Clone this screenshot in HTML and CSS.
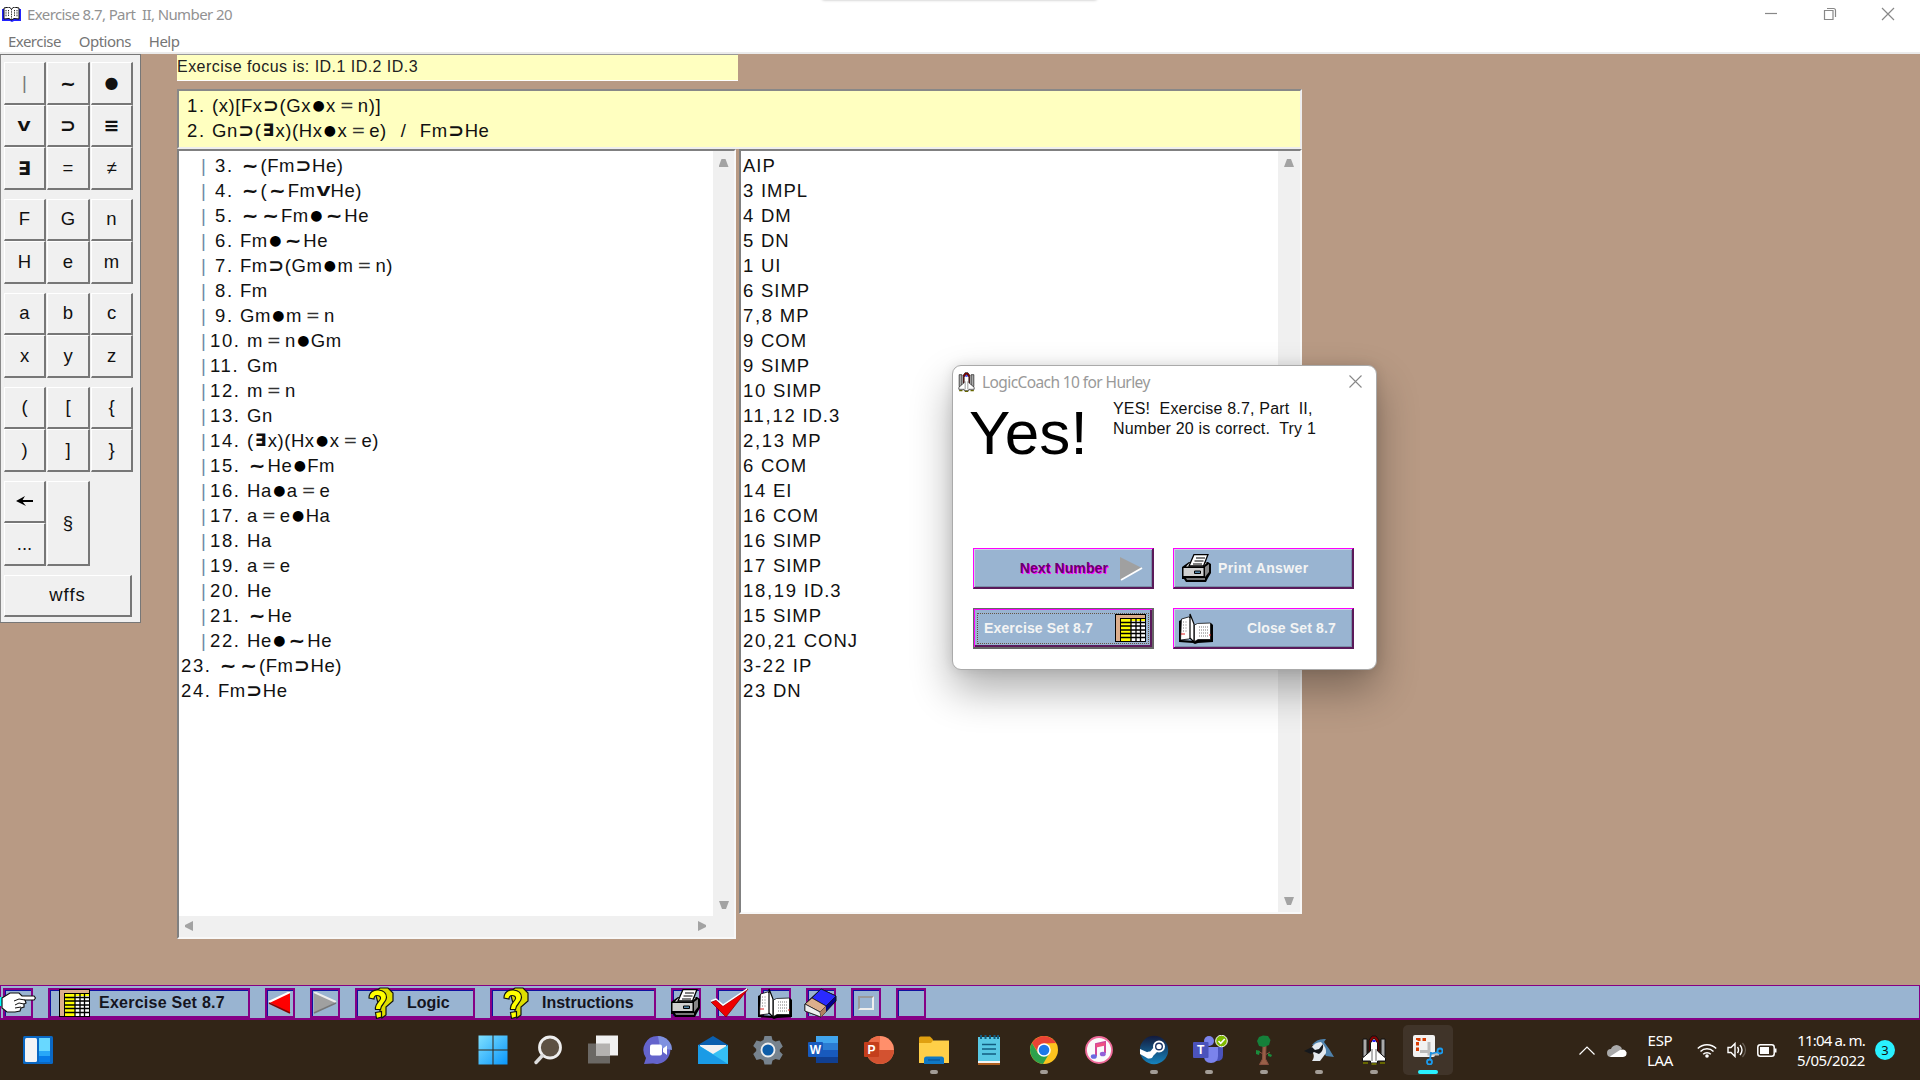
FILE: index.html
```html
<!DOCTYPE html>
<html lang="en">
<head>
<meta charset="utf-8">
<title>Exercise 8.7, Part II, Number 20</title>
<link rel="stylesheet" href="styles.css">
</head>
<body>
<svg class="defs" width="0" height="0" aria-hidden="true">
  <symbol id="printer" viewBox="0 0 30 28">
    <path d="M1 13l7-5h19l3 2v9l-3 5-2 4H5l-2-3H1z" fill="#000"/>
    <path d="M2.500 14h20v8h-20z" fill="#d0d0d0"/><path d="M24 13l4-3v8l-4 5z" fill="#888"/>
    <path d="M5 12.500l4-4h17l-4 4z" fill="#e8e8e8"/><path d="M5 24h19v2H6z" fill="#777"/>
    <path d="M8 12l5-11.500h14L22.500 12z" fill="#fff" stroke="#000" stroke-width="1.300"/>
    <path d="M15 4h9M13.500 7h9M12 10h9" stroke="#000"/><path d="M13.500 17h6v2.500h-6z" fill="#58a" stroke="#000"/>
  </symbol>
  <symbol id="openbook" viewBox="0 0 34 31">
    <path d="M0 8l2-1v20l14 1V12l4-1 12-1 2 2v17l-15 1-3 1-2-1-14-1z" fill="#000"/>
    <path d="M2.500 6l7-2 2 1v20l-2 1-8 1z" fill="#fff" stroke="#000" stroke-width=".8"/>
    <path d="M11 1l2 5 2 5v18l-4-4z" fill="#fff" stroke="#000" stroke-width="1.200"/>
    <path d="M15.500 12l3-1.500 13-.5v16.500H19l-3.500 2z" fill="#fff" stroke="#000" stroke-width=".7"/>
    <path d="M20 14h9.500M20 17h9.500M20 20h9.500M20 23h9.500" stroke="#777" stroke-dasharray="1 1"/>
    <path d="M4 9h5M4 12h5M4 15h5M4 18h5" stroke="#777" stroke-dasharray="1 1.500"/>
    <path d="M2 21h4M30 22h2" stroke="#e02020"/>
  </symbol>
  <symbol id="sheet" viewBox="0 0 31 28">
    <path d="M0 0h31v28H0z" fill="#000"/><path d="M1 1h29v3H5v23H1z" fill="#dcae8c"/>
    <path d="M6 5h10v22H6z" fill="#ff0"/><path d="M16 5h14v22H16z" fill="#fff"/><path d="M6 5h24v2H16z" fill="#ff0"/>
    <path d="M6 8.500h24M6 12h24M6 16h24M6 19.500h24M6 23.500h24M16 5v22M21 5v22M25.500 5v22" stroke="#000" stroke-width="1.300"/>
  </symbol>
  <symbol id="question" viewBox="0 0 26 32">
    <path d="M7 5l5-4h8l5 5v8l-7 6v8l-4 3z" fill="#dede00" stroke="#111" stroke-width="1.200"/>
    <path d="M1 11c0-6 5-8.500 9.500-8 5 .500 8 3 8 7.500 0 5-6 7-6 12H7.500c-1-6 4.500-8 5-11 .300-2-1.500-3-3.500-3-2 0-3 1.500-3 3.500z" fill="#ff0" stroke="#111" stroke-width="1.200"/>
    <path d="M7.500 25.500l6-1v5.500l-5 1.500z" fill="#ff0" stroke="#111" stroke-width="1.200"/>
  </symbol>
  <symbol id="shuttle" viewBox="0 0 28 30">
    <path d="M3 4h4v18H3zM21 4h4v18h-4z" fill="#aaa" stroke="#111"/>
    <path d="M9 5l3-4h4l3 4v12H9z" fill="#8b0000" stroke="#111"/>
    <path d="M14 3l3.500 5v8l8 7v3h-8v2h-7v-2h-8v-3l8-7V8z" fill="#fff" stroke="#111"/>
    <path d="M12 14v12M16 14v12" stroke="#444" stroke-width=".8"/><path d="M12.500 6h3" stroke="#22f" stroke-width="2"/>
    <path d="M3 28h5M11.500 29h5M20 28h5" stroke="#660" stroke-width="2"/>
  </symbol>
</svg>

<header class="titlebar">
  <svg class="app-icon" viewBox="0 0 19 15"><path d="M0 2h19v12h-7l-2 1-2-1H0z" fill="#22f"/><path d="M2 1l5-1 2.500 2L12 0l5 1v11l-5-.500-2.500 1.500L7 11.500 2 12z" fill="#fff" stroke="#111"/><path d="M9.500 2v11M4 3v7M6.500 3v6M12.500 3v6M15 3v7" stroke="#222" stroke-dasharray="1 .7"/></svg>
  <span class="title">Exercise 8.7, Part&nbsp; II, Number 20</span>
  <div class="window-controls">
    <svg viewBox="0 0 14 14"><path d="M1 6.500h12"/></svg>
    <svg viewBox="0 0 14 14"><path d="M1.500 3.500h8.500v9H1.500zM4 1.500h6.500q2 0 2 2V10"/></svg>
    <svg viewBox="0 0 14 14"><path d="M1 1l12 12M13 1L1 13"/></svg>
  </div>
  <i class="top-edge"></i>
</header>
<nav class="menubar"><span>Exercise</span><span>Options</span><span>Help</span></nav>

<main class="workspace">
  <aside class="keypad">
    <div class="keys"><b class="bar">|</b><b class="sym">~</b><b class="sym dot">●</b><b class="sym vee"><i>v</i></b><b class="sym">⊃</b><b class="sym">≡</b><b class="sym">∃</b><b>=</b><b>≠</b></div>
    <div class="keys"><b>F</b><b>G</b><b>n</b><b>H</b><b>e</b><b>m</b></div>
    <div class="keys"><b>a</b><b>b</b><b>c</b><b>x</b><b>y</b><b>z</b></div>
    <div class="keys"><b>(</b><b>[</b><b>{</b><b>)</b><b>]</b><b>}</b></div>
    <div class="keys"><b><svg width="18" height="12" viewBox="0 0 18 12"><path d="M3 6h14" stroke="#000" stroke-width="2"/><path d="M0 6l9-5-3 5 4 5z"/></svg></b><b class="tall">§</b><b class="first">...</b></div>
    <div class="keys wide"><b>wffs</b></div>
  </aside>

  <section class="proof">
    <div class="focus">Exercise focus is: ID.1 ID.2 ID.3</div>
    <div class="premises">
      <p><span class="n">1.</span>(x)[Fx<i class="h">⊃</i>(Gx<i class="d">●</i>x<i class="q">=</i>n)]</p>
      <p><span class="n">2.</span>Gn<i class="h">⊃</i>(<i class="e">∃</i>x)(Hx<i class="d">●</i>x<i class="q">=</i>e)<i class="slash">/</i>Fm<i class="h">⊃</i>He</p>
    </div>
    <div class="panels">
      <div class="panel steps">
        <div class="lines">
          <p class="in one"><span class="n">3.</span><i class="t">~</i>(Fm<i class="h">⊃</i>He)</p>
          <p class="in one"><span class="n">4.</span><i class="t">~</i>(<i class="t">~</i>Fm<i class="v">v</i>He)</p>
          <p class="in one"><span class="n">5.</span><i class="t">~</i><i class="t">~</i>Fm<i class="d">●</i><i class="t">~</i>He</p>
          <p class="in one"><span class="n">6.</span>Fm<i class="d">●</i><i class="t">~</i>He</p>
          <p class="in one"><span class="n">7.</span>Fm<i class="h">⊃</i>(Gm<i class="d">●</i>m<i class="q">=</i>n)</p>
          <p class="in one"><span class="n">8.</span>Fm</p>
          <p class="in one"><span class="n">9.</span>Gm<i class="d">●</i>m<i class="q">=</i>n</p>
          <p class="in"><span class="n">10.</span>m<i class="q">=</i>n<i class="d">●</i>Gm</p>
          <p class="in"><span class="n">11.</span>Gm</p>
          <p class="in"><span class="n">12.</span>m<i class="q">=</i>n</p>
          <p class="in"><span class="n">13.</span>Gn</p>
          <p class="in"><span class="n">14.</span>(<i class="e">∃</i>x)(Hx<i class="d">●</i>x<i class="q">=</i>e)</p>
          <p class="in"><span class="n">15.</span><i class="t">~</i>He<i class="d">●</i>Fm</p>
          <p class="in"><span class="n">16.</span>Ha<i class="d">●</i>a<i class="q">=</i>e</p>
          <p class="in"><span class="n">17.</span>a<i class="q">=</i>e<i class="d">●</i>Ha</p>
          <p class="in"><span class="n">18.</span>Ha</p>
          <p class="in"><span class="n">19.</span>a<i class="q">=</i>e</p>
          <p class="in"><span class="n">20.</span>He</p>
          <p class="in"><span class="n">21.</span><i class="t">~</i>He</p>
          <p class="in"><span class="n">22.</span>He<i class="d">●</i><i class="t">~</i>He</p>
          <p><span class="n">23.</span><i class="t">~</i><i class="t">~</i>(Fm<i class="h">⊃</i>He)</p>
          <p><span class="n">24.</span>Fm<i class="h">⊃</i>He</p>
        </div>
        <div class="vscroll"><i class="up"></i><i class="down"></i></div>
        <div class="hscroll"><i class="left"></i><i class="right"></i></div>
      </div>
      <div class="panel reasons">
        <div class="lines">
          <p>AIP</p><p><u>3</u> IMPL</p><p><u>4</u> DM</p><p><u>5</u> DN</p><p><u>1</u> UI</p><p><u>6</u> SIMP</p><p><u>7,8</u> MP</p><p><u>9</u> COM</p><p><u>9</u> SIMP</p><p><u>10</u> SIMP</p><p><u>11,12</u> ID.3</p><p><u>2,13</u> MP</p><p><u>6</u> COM</p><p><u>14</u> EI</p><p><u>16</u> COM</p><p><u>16</u> SIMP</p><p><u>17</u> SIMP</p><p><u>18,19</u> ID.3</p><p><u>15</u> SIMP</p><p><u>20,21</u> CONJ</p><p><u>3-22</u> IP</p><p><u>23</u> DN</p>
        </div>
        <div class="vscroll"><i class="up"></i><i class="down"></i></div>
      </div>
    </div>
  </section>
</main>

<footer class="toolbar">
  <button class="tool"><svg class="hand" width="37" height="22" viewBox="0 0 37 22"><path d="M0 5h4v9H0z" fill="#0ff"/><path d="M3 6l8-5h9l3 3h12l1.500 2-1.500 2H26l1 3-2 1v3l-3 1-1 3-5 1H8l-5-4z" fill="#fff" stroke="#111" stroke-width="1.200"/><path d="M15 9l5-2 6 1M16 13l4-2 5 1M16 16l6-1" fill="none" stroke="#111"/></svg></button>
  <button class="tool set"><svg width="31" height="28"><use href="#sheet"/></svg><span>Exercise Set 8.7</span></button>
  <button class="tool"><svg width="24" height="22" viewBox="0 0 24 22"><path d="M1 10L22 0v21z" fill="red"/><path d="M1 10L22 0" stroke="#fff" stroke-width="2"/><path d="M1 11l21 10" stroke="#800" stroke-width="1.500"/></svg></button>
  <button class="tool"><svg width="24" height="22" viewBox="0 0 24 22"><path d="M1 0l22 10L1 21z" fill="#a0a0a0"/><path d="M1 0l22 10" stroke="#eee" stroke-width="2"/><path d="M23 11L1 21" stroke="#777" stroke-width="1.500"/></svg></button>
  <button class="tool logic"><svg width="26" height="32"><use href="#question"/></svg><span>Logic</span></button>
  <button class="tool instr"><svg width="26" height="32"><use href="#question"/></svg><span>Instructions</span></button>
  <button class="tool pic"><svg width="30" height="28"><use href="#printer"/></svg></button>
  <button class="tool pic"><svg width="40" height="30" viewBox="0 0 40 30"><path d="M1 14l5-2 7 6L38 1 16 29z" fill="#e00" stroke="#700" stroke-width=".7"/><path d="M1 13l5-2 7 6L37 1" fill="none" stroke="#fff" stroke-width="1.500"/></svg></button>
  <button class="tool pic"><svg width="34" height="31"><use href="#openbook"/></svg></button>
  <button class="tool pic"><svg width="33" height="30" viewBox="0 0 33 30"><path d="M1 16L17 1l15 7v5L17 29 1 23z" fill="#00008b" stroke="#111"/><path d="M17 1l15 7-10 10-14-8z" fill="#2a2aff" stroke="#111" stroke-width=".7"/><path d="M8 10l14 8-6 6-15-8z" fill="#dcae8c" stroke="#111" stroke-width=".7"/><path d="M1 16l15 8 1 5-16-6z" fill="#eee" stroke="#111" stroke-width=".7"/><path d="M16 24l6-6v6l-5 5z" fill="#b08060"/></svg></button>
  <button class="tool"><i class="blank"></i></button>
  <button class="tool"></button>
</footer>

<footer class="taskbar">
  <svg class="widgets" width="30" height="28" viewBox="0 0 30 28"><rect width="30" height="28" rx="1.500" fill="#0a68c4"/><rect x="2" y="2" width="12" height="24" rx="1.500" fill="#f4f4f6"/><path d="M16 2h11v13H16z" fill="#68d8ff"/><path d="M16 15h11v5H16z" fill="#28a8f8"/><path d="M16 20h11v6H16z" fill="#087ce8"/></svg>
  <div class="apps">
    <span><svg viewBox="0 0 30 30"><defs><linearGradient id="win" x2="1" y2="1"><stop stop-color="#7fe0ff"/><stop offset="1" stop-color="#0a96fa"/></linearGradient></defs><path d="M.5.5h14v14H.5zM15.500.5h14v14h-14zM.5 15.500h14v14H.5zM15.500 15.500h14v14h-14z" fill="url(#win)"/></svg></span>
    <span><svg viewBox="0 0 30 30"><circle cx="17" cy="12.500" r="10.500" fill="#5d5143" stroke="#eee" stroke-width="2.800"/><path d="M9.500 20.500L3 27.500" stroke="#ddd" stroke-width="3.400" stroke-linecap="round"/></svg></span>
    <span><svg viewBox="0 0 30 30"><path d="M0 8.500h22v20H0z" fill="#6b6864"/><path d="M8 .5h22v20H8z" fill="#f1f1f1"/><path d="M8 8.500h14v12H8z" fill="#b4b2b0"/></svg></span>
    <span><svg viewBox="0 0 30 30"><path d="M15 1a14 14 0 1 1-5 27.500L1 29l2-6A14 14 0 0 1 15 1z" fill="#6464cc"/><path d="M15 1a14 14 0 0 1 14 14L17 13z" fill="#7f91e0"/><rect x="7" y="9.500" width="12" height="11" rx="2" fill="#fff"/><path d="M20 13.500l4-3v9.500l-4-3z" fill="#fff"/></svg></span>
    <span><svg viewBox="0 0 30 30"><path d="M0 10L15 1l15 9v6H0z" fill="#0a5fae"/><path d="M2 10h26v12H2z" fill="#f1f1f1"/><path d="M0 10l15 9 15-9v19H0z" fill="#35c0f4"/><path d="M0 29V10l30 19z" fill="#1a9be6"/></svg></span>
    <span><svg viewBox="0 0 30 30"><path d="M11.500 1h7l1 4 3 1.500 4-1 3.300 6-3 3v2l3 3-3.300 5.500-4-1-3 1.500-1 4h-7l-1-4-3-1.500-4 1L.2 19l3-3v-2l-3-3 3.300-5.500 4 1 3-1.500z" fill="#77838e"/><circle cx="15" cy="15" r="6.500" fill="#0e5da8" stroke="#eee" stroke-width="1.800"/></svg></span>
    <span><svg viewBox="0 0 30 30"><path d="M8 1h22v9H8z" fill="#41a5ee"/><path d="M8 8h22v7H8z" fill="#2b7cd3"/><path d="M8 15h22v7H8z" fill="#185abd"/><path d="M8 22h22v6H8z" fill="#103f91"/><rect x="0" y="7" width="15" height="15" rx="1" fill="#185abd"/><text x="7.500" y="18.500" class="logo">W</text></svg></span>
    <span><svg viewBox="0 0 30 30"><circle cx="16" cy="15" r="14" fill="#ff8f6b"/><path d="M16 15h14A14 14 0 0 1 2 15z" fill="#d35230"/><path d="M16 1v14H2A14 14 0 0 1 16 1z" fill="#ed6c47"/><rect x="0" y="7" width="15" height="15" rx="1" fill="#c43e1c"/><text x="7.500" y="18.500" class="logo">P</text></svg></span>
    <span class="run"><svg viewBox="0 0 30 30"><path d="M0 3q0-1.500 1.500-1.500H11l3 3v5H0z" fill="#e0a010"/><path d="M0 8h12l2-2.500h16V28H0z" fill="#ffcf48"/><path d="M5 29v-5q0-2.500 2.500-2.500h15q2.500 0 2.500 2.500v5z" fill="#0f78c4"/><path d="M9 25h12" stroke="#0a4a88"/></svg></span>
    <span><svg viewBox="0 0 30 30"><path d="M4 2h22v24H4z" fill="#58c8e4"/><path d="M4 26h22v2.500H4z" fill="#f4f4f4"/><path d="M4 28h22v2H4z" fill="#b06020"/><path d="M8 9.500h14M8 14h14M8 19h14" stroke="#125c80" stroke-width="1.700"/><path d="M7 0v4M11.500 0v4M16 0v4M20.500 0v4M24 0v4" stroke="#125c80" stroke-width="2"/></svg></span>
    <span class="run"><svg viewBox="0 0 30 30"><circle cx="15" cy="15" r="14" fill="#fcc31e"/><path d="M2.900 8A14 14 0 0 1 27.100 8L15 8.500 9.500 18z" fill="#ea4335"/><path d="M2.900 8A14 14 0 0 0 14 29l6.500-11H9z" fill="#2da14c"/><circle cx="15" cy="15" r="6.800" fill="#fff"/><circle cx="15" cy="15" r="5.300" fill="#1e78e8"/></svg></span>
    <span><svg viewBox="0 0 30 30"><circle cx="15" cy="15" r="13" fill="#fafafa" stroke="#ef6a9a" stroke-width="1.800"/><path d="M12 21V9l9-2v11" fill="none" stroke="#d0489a" stroke-width="2"/><path d="M12 11l9-2" stroke="#f05080" stroke-width="3"/><ellipse cx="9.800" cy="21.500" rx="3" ry="2.300" fill="#6a6ae0"/><ellipse cx="18.800" cy="19" rx="3" ry="2.300" fill="#9060d8"/></svg></span>
    <span class="run"><svg viewBox="0 0 30 30"><defs><linearGradient id="stm" x2="0" y2="1"><stop stop-color="#131a3c"/><stop offset="1" stop-color="#1684be"/></linearGradient></defs><circle cx="15" cy="15" r="14.200" fill="url(#stm)"/><path d="M1 14l9 4 5-6 4 4-6 6-4 1.500L1 19z" fill="#fff"/><circle cx="20" cy="11.500" r="5" fill="#1a3464" stroke="#fff" stroke-width="2"/><circle cx="20" cy="11.500" r="2.600" fill="#fff"/><circle cx="10.500" cy="20" r="3.500" fill="#fff"/></svg></span>
    <span class="run"><svg class="teams" viewBox="0 0 36 30"><circle cx="16" cy="6" r="5" fill="#7b83eb"/><path d="M20 12h10v8q0 6-6 6h-4z" fill="#4b53bc"/><path d="M11 12h14v9q0 7-7 7t-7-7z" fill="#7b83eb"/><rect x="0" y="7" width="15.500" height="16" rx="1" fill="#4b53bc"/><text x="7.700" y="19" class="logo">T</text><circle cx="28.500" cy="6" r="5.800" fill="#7fba00" stroke="#fff"/><path d="M25.500 6l2.200 2.300 4-4.300" fill="none" stroke="#fff" stroke-width="1.600"/></svg></span>
    <span class="run"><svg viewBox="0 0 30 30"><path d="M14 11h3l-.5 13 3 5.500h-9l3-5.500zM16 20l5-3M14 19l-5-3" fill="#9a6048" stroke="#8a5040"/><path d="M10 2l4-1.500 5 .500 2.500 4-1.500 5-5 2-5-1-2-5z" fill="#15803a"/><path d="M7 15l4 1-1 4-3-1zM19 18l4 2-1 2-3-1z" fill="#1a8c3c"/></svg></span>
    <span class="run"><svg viewBox="0 0 30 30"><path d="M8 10q5-7 14-6l-2 3q5 6 10 15l-8-1-6-9z" fill="#4f82ac"/><path d="M7 13q4-6 10-6 6 6 5 11l-6 8H8q3-4 1-8z" fill="#e4eaf0"/><path d="M0 16l8-4 3 3 4-1 4-5q1 7-4 10l-5-2-3 2z" fill="#15181c"/></svg></span>
    <span class="run"><svg viewBox="0 0 28 30"><use href="#shuttle"/></svg></span>
    <span class="active"><svg viewBox="0 0 30 30"><rect y="0" width="22" height="22" rx="2" fill="#f2f2f2"/><path d="M4.500 16V4.500H14" fill="none" stroke="#d83b01" stroke-width="3" stroke-dasharray="3.500 2"/><path d="M16 7v12h10M7 16.500h10" fill="none" stroke="#bbb" stroke-width="3"/><path d="M17 19l8-2M18 17l-1 8" stroke="#1a8fe0" stroke-width="1.800"/><circle cx="27" cy="16" r="2.500" fill="none" stroke="#1a9cf0" stroke-width="1.800"/><circle cx="16.500" cy="27" r="2.500" fill="none" stroke="#1a9cf0" stroke-width="1.800"/></svg></span>
  </div>
  <div class="tray">
    <svg width="16" height="9" viewBox="0 0 16 9"><path d="M.5 8.500L8 1l7.500 7.500"/></svg>
    <svg class="cloud" width="20" height="13" viewBox="0 0 20 13"><path d="M4 13a4 4 0 0 1 0-8 6 6 0 0 1 10-2l1 2-8 8z" fill="#aaa" stroke="none"/><path d="M3 12.500L13 6q5-2 6.500 2.500.5 4-3.500 4.500H4z" fill="#fff" stroke="none"/></svg>
    <div class="lang">ESP<br>LAA</div>
    <svg width="20" height="15" viewBox="0 0 20 15"><path d="M.8 5.500a13 13 0 0 1 18.400 0M3.500 8.500a9.200 9.200 0 0 1 13 0M6.200 11.300a5.400 5.400 0 0 1 7.600 0" stroke-width="1.500"/><circle cx="10" cy="13" r="1.800" fill="#fff" stroke="none"/></svg>
    <svg width="20" height="16" viewBox="0 0 20 16"><path d="M1 5.500h3l4-4v13l-4-4H1zM10.500 5q2 3 0 6M13 3q4 5 0 10" stroke-width="1.400"/><path d="M15.500 1q6 7 0 14" stroke="#6b6258"/></svg>
    <svg width="20" height="13" viewBox="0 0 20 13"><rect x=".8" y=".8" width="16.400" height="11.400" rx="2.500" stroke-width="1.500"/><path d="M3 3h9v7H3z" fill="#fff" stroke="none"/><path d="M18 4.500h1.500v4H18z" fill="#fff" stroke="none"/></svg>
    <div class="clock"><span class="time">11:04 a. m.</span><br>5/05/2022</div>
    <span class="badge">3</span>
  </div>
</footer>

<div class="dialog">
  <div class="dlg-title"><svg width="19" height="20" viewBox="0 0 28 30"><use href="#shuttle"/></svg><span>LogicCoach 10 for Hurley</span><svg class="x" width="13" height="13" viewBox="0 0 13 13"><path d="M.5.5l12 12M12.500.5l-12 12" stroke="#888" stroke-width="1.100"/></svg></div>
  <div class="dlg-body"><div class="yes">Yes!</div><div class="msg">YES!  Exercise 8.7, Part  II,
Number 20 is correct.  Try 1</div></div>
  <div class="dlg-buttons">
    <button class="db next"><span>Next Number</span><svg width="24" height="25" viewBox="0 0 24 25"><path d="M1 1l22 11L1 24z" fill="#a0a0a0"/><path d="M23 12L2 24" stroke="#fff" stroke-width="1.800"/></svg></button>
    <button class="db print"><svg width="30" height="28"><use href="#printer"/></svg><span>Print Answer</span></button>
    <button class="db exset"><span>Exercise Set 8.7</span><svg width="31" height="28"><use href="#sheet"/></svg></button>
    <button class="db close"><svg width="34" height="31"><use href="#openbook"/></svg><span>Close Set 8.7</span></button>
  </div>
</div>
</body>
</html>
```
FILE: styles.css
```css
* { box-sizing: border-box; }
body { margin: 0; width: 1920px; height: 1080px; overflow: hidden; background: #b89a84; font-family: "Liberation Sans", Arial, sans-serif; color: #111; display: flex; flex-direction: column; }
p { margin: 0; }
i { font-style: normal; }
button { margin: 0; padding: 0; font-family: inherit; }
svg { display: block; flex: none; }
.defs { position: absolute; }

.titlebar { height: 28px; background: #fff; display: flex; align-items: center; padding-left: 2px; font: 15px/28px "Noto Sans", sans-serif; color: #929292; position: relative; }
.app-icon { width: 19px; height: 15px; margin-right: 6px; }
.title { letter-spacing: -.6px; }
.window-controls { margin-left: auto; display: flex; gap: 44.500px; padding-right: 25px; }
.window-controls svg { width: 14px; height: 14px; fill: none; stroke: #888; stroke-width: 1.200; }
.top-edge { position: absolute; left: 822px; top: -4px; width: 275px; height: 4px; border-radius: 4px; box-shadow: 0 0 3px rgba(0,0,0,.3); }
.menubar { height: 26px; background: #fff; border-bottom: 2px solid #ebebeb; display: flex; gap: 18px; padding-left: 8px; font: 15px/26px "Noto Sans", sans-serif; color: #757575; letter-spacing: -.53px; }

.workspace { height: 931px; display: flex; align-items: flex-start; }
.keypad { width: 141px; height: 569px; margin-right: 36px; padding: 7px 0 0 4px; background: #f0f0f0; border: 1px solid #777; border-left-width: 0; border-top-width: 1px; box-shadow: inset 1px 0 #888; display: flex; flex-direction: column; gap: 9px; }
.keys { display: grid; grid-template-columns: 42px 43px 42px; column-gap: 1px; grid-auto-rows: 42.500px; }
.keys b { font-weight: 400; font-size: 18.500px; display: flex; align-items: center; justify-content: center; background: #f0f0f0; border: 1px solid #fff; border-right: 2px solid #777; border-bottom: 2px solid #777; }
.keys b.sym { font: bold 19px "DejaVu Sans", sans-serif; }
.keys b.dot { font-size: 16px; }
.keys b.vee { font-size: 18px; font-family: "Liberation Sans", sans-serif; }
.vee i { transform: scaleX(1.3); }
.keys .bar { color: #777; }
.keys .tall { grid-row: span 2; }
.keys .first { grid-column: 1; }
.keys.wide { grid-template-columns: 128px; }
.keys.wide b { letter-spacing: 1px; }

.proof { width: 1125px; display: flex; flex-direction: column; }
.focus { width: 561px; height: 27px; margin-bottom: 8px; background: #ffffc0; border-top: 1px solid #999; border-bottom: 1px solid #fff; font-size: 16px; line-height: 23px; letter-spacing: .46px; color: #222; }
.premises { height: 60px; background: #ffffc0; border: 2px solid #888; border-right-color: #eee; border-bottom-color: #eee; padding: 2px 0 0 8px; white-space: nowrap; }
.premises p, .lines p { font-size: 18.500px; line-height: 25px; height: 25px; letter-spacing: .55px; white-space: nowrap; display: flex; }
.premises .n { width: 25px; }
.n, .lines u { letter-spacing: 1.600px; text-decoration: none; }
.lines u { white-space: pre; margin-right: 6px; }
.panels { display: flex; align-items: flex-start; gap: 3px; }
.panel { border: 2px solid #808080; border-right-color: #f8f8f8; border-bottom-color: #f8f8f8; background: #fff; display: grid; }
.steps { width: 559px; height: 790px; grid-template: 765px 1fr / 1fr 21px; }
.reasons { width: 563px; height: 765px; grid-template: 1fr / 1fr 22px; }
.reasons .lines { padding-left: 2px; }
.reasons .lines p { letter-spacing: .95px; }
.reasons .lines u { letter-spacing: 1.700px; }
.lines { padding: 2px 0 0 2px; }
.lines .n { width: 37px; }
.lines .in { padding-left: 29px; position: relative; }
.lines .in::before { content: "|"; position: absolute; left: 20px; color: #6d87a4; }
.lines .one { padding-left: 34px; }
.lines .one .n { width: 25px; }
.premises i, .lines i { display: flex; justify-content: center; letter-spacing: 0; font-family: "DejaVu Sans", sans-serif; font-weight: bold; flex: none; }
.premises .h, .lines .h { width: 17px; font-size: 19px; line-height: 24px; }
.premises .d, .lines .d { width: 15px; font-size: 14px; line-height: 24px; color: #000; }
.premises .q, .lines .q { width: 22px; font-size: 17px; font-weight: 400; color: #333; }
.premises .e, .lines .e { width: 14px; font-size: 17px; }
.lines .t { width: 20.500px; font-size: 20px; }
.lines .v { width: 15px; font-size: 18px; font-family: "Liberation Sans", sans-serif; transform: scaleX(1.4); }
.premises .slash { width: 33px; font-family: inherit; font-weight: 400; }
.vscroll { background: #f0f0f0; display: flex; flex-direction: column; align-items: center; justify-content: space-between; padding: 8px 0 7px 0; }
.hscroll { grid-column: 1 / 3; background: #f0f0f0; display: flex; justify-content: space-between; align-items: center; padding: 0 28px 1px 6px; }
.up, .down { width: 10px; height: 8px; background: #a3a3a3; clip-path: polygon(30% 0, 70% 0, 100% 100%, 0 100%); }
.down { transform: rotate(180deg); }
.left, .right { width: 8px; height: 10px; background: #a3a3a3; clip-path: polygon(100% 0, 100% 100%, 0 60%, 0 40%); }
.right { transform: rotate(180deg); }

.toolbar { height: 35px; background: #99b4d1; border: 1px solid #850085; border-width: 1px 1px 2px 1px; padding: 2px 0 0 2px; display: flex; gap: 15px; }
.tool { width: 30px; height: 30px; background: #99b4d1; border: 2px solid #850085; box-shadow: inset 1px 1px #1010a0; display: flex; align-items: center; justify-content: center; flex: none; font-weight: bold; font-size: 16px; color: #15151f; }
.tool svg { margin: -4px; }
.tool.pic svg { margin-left: -6px; }
.tool .hand { margin-left: -6px; }
.tool.set { width: 202px; justify-content: flex-start; letter-spacing: .25px; }
.tool.set svg { margin: 0 9px 0 9px; }
.tool.logic { width: 120px; justify-content: flex-start; }
.tool.instr { width: 166px; justify-content: flex-start; }
.tool.logic svg, .tool.instr svg { margin: -4px 13px -4px 11px; }
.blank { width: 16px; height: 14px; border: 2px solid #eee; border-top-color: #999; border-left-color: #999; }

.taskbar { height: 60px; background: #322517; display: flex; align-items: center; position: relative; }
.widgets { margin-left: 23px; }
.apps { margin-left: 412.700px; display: flex; }
.apps span { width: 55.060px; height: 50px; display: flex; align-items: center; justify-content: center; position: relative; }
.apps svg { width: 30px; height: 30px; }
.apps .teams { width: 36px; margin-left: 4px; }
.apps .run::after, .apps .active::after { content: ""; position: absolute; bottom: 1px; width: 8px; height: 4px; border-radius: 2px; background: #a39d97; }
.apps .active { width: 50px; margin-left: 2px; background: #403429; border-radius: 5px; }
.apps .active::after { width: 20px; background: #29f1ff; }
.logo { font: bold 12px "Liberation Sans", sans-serif; fill: #fff; text-anchor: middle; }
.tray { margin-left: auto; padding-right: 25px; display: flex; align-items: center; color: #fff; font: 15px/20px "Noto Sans", sans-serif; }
.tray svg { fill: none; stroke: #fff; stroke-width: 1.200; margin-right: 10px; }
.tray .cloud { margin: 0 17px 0 2px; }
.lang { width: 32px; text-align: center; margin-right: 21px; letter-spacing: -.3px; }
.clock { width: 78px; text-align: right; margin-right: 10px; letter-spacing: -.35px; white-space: nowrap; }
.time { letter-spacing: -.8px; }
.badge { width: 20px; height: 20px; border-radius: 50%; background: #29f1ff; color: #111; font-size: 13px; text-align: center; }

.dialog { position: absolute; left: 952px; top: 365px; width: 425px; height: 305px; background: #fff; border: 1px solid #aaa; border-radius: 9px; box-shadow: 0 20px 42px rgba(0,0,0,.32), 0 0 12px rgba(0,0,0,.1); display: flex; flex-direction: column; }
.dlg-title { height: 30px; display: flex; align-items: center; padding: 1px 14px 0 4px; font: 15.500px/28px "Noto Sans", sans-serif; color: #999; letter-spacing: -.6px; }
.dlg-title span { margin-left: 6px; }
.dlg-title .x { margin-left: auto; }
.dlg-body { height: 152px; display: flex; }
.yes { width: 144px; margin-left: 16px; font-size: 62px; line-height: 74px; color: #000; letter-spacing: .1px; }
.msg { white-space: pre; font-size: 16px; line-height: 20px; padding-top: 3px; letter-spacing: .2px; }
.dlg-buttons { display: grid; grid-template-columns: 181px 181px; gap: 19px; grid-auto-rows: 41px; padding-left: 20px; }
.db { background: #99b4d1; border: 1px solid #f0f; border-right: 2px solid #5a1a5a; border-bottom: 2px solid #5a1a5a; box-shadow: inset 1px 1px #c8d4e4, inset -1px -1px #7a90aa; display: flex; align-items: center; font-weight: bold; font-size: 14px; color: #f4f4f4; position: relative; }
.next { color: #6a006a; justify-content: flex-end; padding-right: 9px; text-shadow: 1px 1px #f0f; }
.next span { margin-right: 11px; letter-spacing: .1px; }
.print { padding-left: 7px; }
.print span { margin-left: 7px; letter-spacing: .4px; }
.exset { padding: 0 6px 0 10px; justify-content: space-between; border: 1px solid #666; border-right-width: 2px; border-bottom-width: 2px; box-shadow: inset 1px 1px #f0f, inset -2px -2px #5a1a5a; }
.exset::after { content: ""; position: absolute; inset: 4px 3px 3px 3px; border: 1px dotted #654; }
.exset span { letter-spacing: .15px; }
.close { padding: 0 16px 0 5px; justify-content: space-between; }
.close span { letter-spacing: .15px; }
```
